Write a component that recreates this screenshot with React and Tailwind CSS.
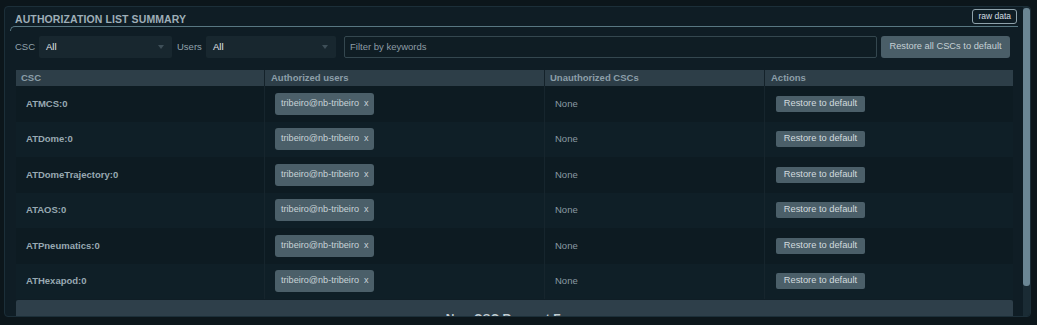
import React from "react";

const cscs = [
  "ATMCS:0",
  "ATDome:0",
  "ATDomeTrajectory:0",
  "ATAOS:0",
  "ATPneumatics:0",
  "ATHexapod:0",
];

const Select = ({ width, value }) => (
  <div
    className={`${width} h-[22px] bg-[#18272f] rounded-[2px] flex items-center justify-between pl-[7px] pr-[8px]`}
  >
    <span className="text-[#e3e9ec]">{value}</span>
    <span className="w-0 h-0 border-l-[3px] border-r-[3px] border-t-[4px] border-l-transparent border-r-transparent border-t-[#3e4f58]" />
  </div>
);

const App = () => {
  return (
    <div
      className="w-[1037px] h-[325px] bg-[#0c161b] pt-[6px] pl-[4px] text-[9.5px]"
      style={{ fontFamily: '"Liberation Sans", Arial, sans-serif' }}
    >
      <div className="w-[1027px] h-[311px] bg-[#0f1d25] border border-[#1c2f39] rounded-[4px] flex overflow-hidden">
        {/* content */}
        <div className="w-[1018px] h-full overflow-hidden">
          <div className="flex items-center justify-between h-[19px] ml-[5px] mr-[5px]">
            <span className="pl-[5px] pt-[6px] text-[10.5px] font-bold text-[#9eaeb7] tracking-[0.1px]">
              AUTHORIZATION LIST SUMMARY
            </span>
            <span className="h-[15px] px-[5px] mr-[1px] border border-[#8fa2ab] rounded-[3px] text-[8.5px] text-[#d6dee2] flex items-center">
              raw data
            </span>
          </div>
          <div className="ml-[5px] mr-[5px] h-[5px] border-t border-l border-[#587782] rounded-tl-[6px]" />

          {/* filters */}
          <div className="mt-[5px] ml-[10px] flex items-center h-[22px]">
            <span className="w-[19px] text-[#92a3ac] mr-[5px]">CSC</span>
            <Select width="w-[133px]" value="All" />
            <span className="w-[24px] text-[#92a3ac] ml-[5px] mr-[5px]">Users</span>
            <Select width="w-[130px]" value="All" />
            <div className="ml-[8px] w-[533px] h-[22px] border border-[#34474f] rounded-[2px] bg-[#0f1d24] flex items-center pl-[5px] text-[#8d9ca4]">
              Filter by keywords
            </div>
            <div className="ml-[4px] w-[129px] h-[22px] bg-[#4a5e68] rounded-[3px] flex items-center justify-center text-[#c5d0d5] text-[9.3px]">
              Restore all CSCs to default
            </div>
          </div>

          {/* table */}
          <div className="mt-[12px] ml-[11px] w-[997px]">
            <div className="grid grid-cols-[249px_280px_220px_248px] h-[16px] bg-[#2d3e48] font-bold text-[#8c9ea8]">
              <div className="pl-[5px] flex items-center border-r border-[#14222a]">CSC</div>
              <div className="pl-[6px] flex items-center border-r border-[#14222a]">Authorized users</div>
              <div className="pl-[5px] flex items-center border-r border-[#14222a]">Unauthorized CSCs</div>
              <div className="pl-[6px] flex items-center">Actions</div>
            </div>
            {cscs.map((csc, i) => (
              <div
                key={csc}
                className={`grid grid-cols-[249px_280px_220px_248px] h-[35.5px] ${
                  i % 2 === 0 ? "bg-[#0d1b22]" : "bg-[#0f1f27]"
                }`}
              >
                <div className="pl-[10px] flex items-center font-bold text-[#98a9b2] border-r border-[#16252d]">
                  {csc}
                </div>
                <div className="pl-[10px] flex items-center border-r border-[#16252d]">
                  <span className="h-[22px] w-[99px] bg-[#4b5f69] rounded-[3px] flex items-center pl-[6px] text-[#c8d3d8] text-[9.1px]">
                    tribeiro@nb-tribeiro
                    <span className="ml-[5px]">x</span>
                  </span>
                </div>
                <div className="pl-[10px] flex items-center text-[#8a9aa2] border-r border-[#16252d]">
                  None
                </div>
                <div className="pl-[11px] flex items-center">
                  <span className="h-[16px] w-[89px] bg-[#4b5f69] rounded-[2px] flex items-center justify-center text-[#d2dbdf] text-[9.3px]">
                    Restore to default
                  </span>
                </div>
              </div>
            ))}
            <div className="mt-[1px] h-[30px] bg-[#2e3f4a] rounded-t-[2px] flex justify-center pt-[13px] text-[12px] leading-none font-bold text-[#c0ccd2]">
              New CSC Request Form
            </div>
          </div>
        </div>

        {/* scrollbar */}
        <div className="w-[7px] h-full flex flex-col pt-[1px] bg-[#1a2b34]">
          <div className="h-[278px] bg-[#6b8694] rounded-[3px]" />
        </div>
      </div>
    </div>
  );
};

export default App;
